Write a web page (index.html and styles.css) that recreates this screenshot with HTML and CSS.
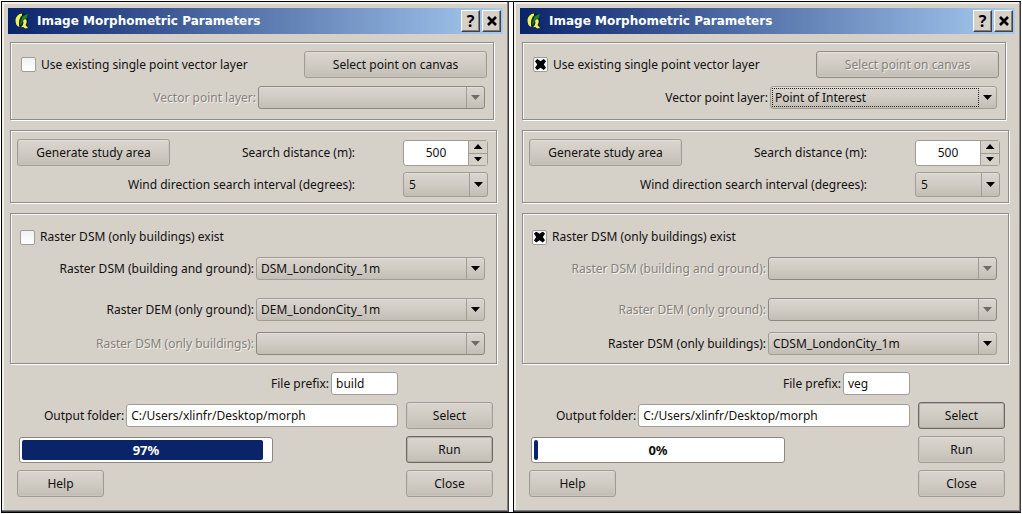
FILE: index.html
```html
<!DOCTYPE html>
<html lang="en">
<head>
<meta charset="utf-8">
<title>Image Morphometric Parameters</title>
<link rel="stylesheet" href="styles.css">
</head>
<body>
<main class="desk">
  <section class="window" aria-label="Image Morphometric Parameters, buildings">
    <header class="titlebar">
      <svg class="logo" viewBox="0 0 16 18" aria-hidden="true">
        <path d="M8 1 C4 1 1 4.500 1 8.500 C1 12 2.500 15 6 15.500 L8 15 L11 17 L14 16 L12 13.500 C14.500 11 14.500 6 13 4 L14 1 L11 2 Z" fill="#101c30"/>
        <path d="M8 1.500 C4 2 1.500 5 1.500 8.500 C1.500 12 3 14.500 5.500 15 C4.500 11 5 6 8 3.500 Z" fill="#f0f25a"/>
        <path d="M10.500 7 C13 7 13.500 10 11.500 13 L14 16 L11 16.500 L9.500 15 L7 15.200 C9 13 10 11.500 9 9 Z" fill="#f0f25a"/>
        <path d="M8.500 4.500 L14 1.500 L12.500 6.500 L9 8 L7 13 L6 12 L7.500 7 Z" fill="#178a24"/>
      </svg>
      <h1 class="title">Image Morphometric Parameters</h1>
      <button class="tbtn" type="button" aria-label="Context help">?</button>
      <button class="tbtn" type="button" aria-label="Close window"><svg viewBox="0 0 10 10" width="10" height="10"><path d="M1 1 L9 9 M9 1 L1 9" stroke="#000" stroke-width="2.600"/></svg></button>
    </header>
    <form class="content">
      <fieldset class="group group-point">
        <div class="row">
          <input class="check" type="checkbox" id="a-existing"><label class="grow" for="a-existing">Use existing single point vector layer</label>
          <button class="btn btn-canvas" type="button">Select point on canvas</button>
        </div>
        <div class="row row-field">
          <label class="off" for="a-point">Vector point layer:</label>
          <span class="combo combo-point"><select id="a-point" disabled><option></option></select></span>
        </div>
      </fieldset>
      <fieldset class="group group-area">
        <div class="row">
          <button class="btn btn-area" type="button">Generate study area</button>
          <label class="grow far" for="a-dist">Search distance (m):</label>
          <span class="spin"><input id="a-dist" type="text" inputmode="numeric" value="500"><button class="step up" type="button" aria-label="Increase"></button><button class="step down" type="button" aria-label="Decrease"></button></span>
        </div>
        <div class="row">
          <label class="grow far" for="a-wind">Wind direction search interval (degrees):</label>
          <span class="combo combo-wind"><select id="a-wind"><option>5</option></select></span>
        </div>
      </fieldset>
      <fieldset class="group group-raster">
        <div class="row row-check"><input class="check" type="checkbox" id="a-only"><label for="a-only">Raster DSM (only buildings) exist</label></div>
        <div class="row row-field">
          <label for="a-dsm">Raster DSM (building and ground):</label>
          <span class="combo"><select id="a-dsm"><option>DSM_LondonCity_1m</option></select></span>
        </div>
        <div class="row row-field row-dem">
          <label for="a-dem">Raster DEM (only ground):</label>
          <span class="combo"><select id="a-dem"><option>DEM_LondonCity_1m</option></select></span>
        </div>
        <div class="row row-field">
          <label class="off" for="a-bld">Raster DSM (only buildings):</label>
          <span class="combo"><select id="a-bld" disabled><option></option></select></span>
        </div>
      </fieldset>
      <div class="output">
        <div class="row row-prefix"><label for="a-prefix">File prefix:</label><input class="text prefix" id="a-prefix" type="text" value="build"></div>
        <div class="row row-folder"><label for="a-folder">Output folder:</label><input class="text folder" id="a-folder" type="text" value="C:/Users/xlinfr/Desktop/morph"><button class="btn btn-side" type="button">Select</button></div>
        <div class="row spread">
          <div class="progress" role="progressbar" aria-valuemin="0" aria-valuemax="100" aria-valuenow="97" aria-label="Progress"><div class="fill" style="width: 97%"></div><span class="percent on-fill">97%</span></div>
          <button class="btn btn-side btn-default" type="button">Run</button>
        </div>
        <div class="row spread">
          <button class="btn btn-side btn-help" type="button">Help</button>
          <button class="btn btn-side" type="button">Close</button>
        </div>
      </div>
    </form>
  </section>

  <section class="window" aria-label="Image Morphometric Parameters, vegetation">
    <header class="titlebar">
      <svg class="logo" viewBox="0 0 16 18" aria-hidden="true">
        <path d="M8 1 C4 1 1 4.500 1 8.500 C1 12 2.500 15 6 15.500 L8 15 L11 17 L14 16 L12 13.500 C14.500 11 14.500 6 13 4 L14 1 L11 2 Z" fill="#101c30"/>
        <path d="M8 1.500 C4 2 1.500 5 1.500 8.500 C1.500 12 3 14.500 5.500 15 C4.500 11 5 6 8 3.500 Z" fill="#f0f25a"/>
        <path d="M10.500 7 C13 7 13.500 10 11.500 13 L14 16 L11 16.500 L9.500 15 L7 15.200 C9 13 10 11.500 9 9 Z" fill="#f0f25a"/>
        <path d="M8.500 4.500 L14 1.500 L12.500 6.500 L9 8 L7 13 L6 12 L7.500 7 Z" fill="#178a24"/>
      </svg>
      <h1 class="title">Image Morphometric Parameters</h1>
      <button class="tbtn" type="button" aria-label="Context help">?</button>
      <button class="tbtn" type="button" aria-label="Close window"><svg viewBox="0 0 10 10" width="10" height="10"><path d="M1 1 L9 9 M9 1 L1 9" stroke="#000" stroke-width="2.600"/></svg></button>
    </header>
    <form class="content">
      <fieldset class="group group-point">
        <div class="row">
          <input class="check" type="checkbox" id="b-existing" checked><label class="grow" for="b-existing">Use existing single point vector layer</label>
          <button class="btn btn-canvas" type="button" disabled>Select point on canvas</button>
        </div>
        <div class="row row-field">
          <label for="b-point">Vector point layer:</label>
          <span class="combo combo-point focused"><select id="b-point"><option>Point of Interest</option></select></span>
        </div>
      </fieldset>
      <fieldset class="group group-area">
        <div class="row">
          <button class="btn btn-area" type="button">Generate study area</button>
          <label class="grow far" for="b-dist">Search distance (m):</label>
          <span class="spin"><input id="b-dist" type="text" inputmode="numeric" value="500"><button class="step up" type="button" aria-label="Increase"></button><button class="step down" type="button" aria-label="Decrease"></button></span>
        </div>
        <div class="row">
          <label class="grow far" for="b-wind">Wind direction search interval (degrees):</label>
          <span class="combo combo-wind"><select id="b-wind"><option>5</option></select></span>
        </div>
      </fieldset>
      <fieldset class="group group-raster">
        <div class="row row-check"><input class="check" type="checkbox" id="b-only" checked><label for="b-only">Raster DSM (only buildings) exist</label></div>
        <div class="row row-field">
          <label class="off" for="b-dsm">Raster DSM (building and ground):</label>
          <span class="combo"><select id="b-dsm" disabled><option></option></select></span>
        </div>
        <div class="row row-field row-dem">
          <label class="off" for="b-dem">Raster DEM (only ground):</label>
          <span class="combo"><select id="b-dem" disabled><option></option></select></span>
        </div>
        <div class="row row-field">
          <label for="b-bld">Raster DSM (only buildings):</label>
          <span class="combo"><select id="b-bld"><option>CDSM_LondonCity_1m</option></select></span>
        </div>
      </fieldset>
      <div class="output">
        <div class="row row-prefix"><label for="b-prefix">File prefix:</label><input class="text prefix" id="b-prefix" type="text" value="veg"></div>
        <div class="row row-folder"><label for="b-folder">Output folder:</label><input class="text folder" id="b-folder" type="text" value="C:/Users/xlinfr/Desktop/morph"><button class="btn btn-side btn-default" type="button">Select</button></div>
        <div class="row spread">
          <div class="progress" role="progressbar" aria-valuemin="0" aria-valuemax="100" aria-valuenow="0" aria-label="Progress"><div class="fill" style="width: 0%"></div><span class="percent">0%</span></div>
          <button class="btn btn-side" type="button">Run</button>
        </div>
        <div class="row spread">
          <button class="btn btn-side btn-help" type="button">Help</button>
          <button class="btn btn-side" type="button">Close</button>
        </div>
      </div>
    </form>
  </section>
</main>
</body>
</html>
```
FILE: styles.css
```css
* { box-sizing: border-box; }

body {
  margin: 0;
  background: #fff;
  color: #111;
  font: 12px/16px "Noto Sans", "DejaVu Sans", sans-serif;
}

button, input, select { font: inherit; color: inherit; margin: 0; }

.desk {
  display: grid;
  grid-template-columns: 1fr 1fr;
  gap: 4px;
  margin: 1px;
  border-top: 1px solid #000;
  border-bottom: 1px solid #000;
}

.window {
  border-left: 1px solid #000;
  padding: 6px;
  background: #d5d0c8;
  box-shadow: inset -1px -1px #404040, inset -2px -2px #808080, inset 2px 2px #f1f0e4;
}

.titlebar {
  display: flex;
  align-items: center;
  height: 26px;
  padding: 0 2px 0 6px;
  background: linear-gradient(90deg, #0a246a, #a6caf0);
}

.logo { width: 16px; height: 18px; margin-right: 7px; }

.title {
  flex: 1;
  margin: 0;
  color: #fff;
  font-family: "DejaVu Sans", sans-serif;
  font-size: 12px;
  font-weight: 700;
  line-height: 18px;
  white-space: nowrap;
}

.tbtn {
  display: grid;
  place-items: center;
  width: 19px;
  height: 22px;
  margin-left: 2px;
  padding: 0;
  border: 1px solid;
  border-color: #fff #404040 #404040 #fff;
  background: #d5d0c8;
  box-shadow: inset -1px -1px #808080;
  color: #000;
  font-size: 16px;
  font-weight: 700;
  line-height: 18px;
}

.content { padding: 8px 2px 9px; }

.group {
  min-width: 0;
  margin: 0 4px 10px 0;
  border: 1px solid #8c8c8a;
  box-shadow: inset 1px 1px #f8f7f5, 1px 1px #fff;
}
.group-point { margin-right: 7px; padding: 8px 6px 10px 10px; }
.group-area { padding: 8px 8px 5px 6px; }
.group-raster { margin-bottom: 8px; padding: 15px 11px 8px 9px; }

.row { display: flex; align-items: center; }
.row label { white-space: nowrap; }
.grow { flex: 1; }
.far { padding-right: 48px; text-align: right; }
.row-field { justify-content: flex-end; gap: 2px; }
.spread { justify-content: space-between; }

.group-point .row-field { margin-top: 8px; padding-right: 2px; }
.group-area .row + .row { margin-top: 6px; }
.row-check { margin-bottom: 12px; }
.row-dem { margin: 18px 0 11px; }

.off, .btn:disabled, .combo select:disabled {
  color: #85817a;
  text-shadow: 1px 1px #f4f2ee;
}

.check {
  appearance: none;
  display: grid;
  place-items: center;
  width: 15px;
  height: 15px;
  margin-right: 5px;
  border: 1px solid #a09d96;
  border-radius: 2px;
  background: linear-gradient(#f2f2f2, #fff);
}
.check:checked::before {
  content: "";
  width: 11px;
  height: 11px;
  background: #000;
  clip-path: polygon(0 20%, 20% 0, 50% 20%, 80% 0, 100% 20%, 80% 50%, 100% 80%, 80% 100%, 50% 80%, 20% 100%, 0 80%, 20% 50%);
}

.btn {
  height: 27px;
  padding: 0 8px;
  border: 1px solid #a19d95;
  border-radius: 3px;
  background: linear-gradient(#dad6cf, #d0cbc3 50%, #c2bdb5);
  box-shadow: inset 0 1px #e2dfd9, inset 0 0 0 1px #cac6be;
  text-align: center;
}
.btn:disabled { border-color: #918d86; }
.btn-canvas { width: 183px; }
.btn-area { width: 153px; }
.btn-side { width: 87px; }
.btn-default { border-color: #6b6964; box-shadow: inset 0 0 0 1px #b3afa7; }

.combo { position: relative; display: flex; width: 229px; }
.combo-point { width: 227px; }
.combo-wind { width: 85px; }
.combo select {
  appearance: none;
  width: 100%;
  height: 23px;
  padding: 0 22px 0 4px;
  border: 1px solid #a19d95;
  border-radius: 3px;
  background: linear-gradient(#dad6cf, #d0cbc3 50%, #c2bdb5);
  box-shadow: inset 0 1px #e2dfd9;
  opacity: 1;
}
.combo-wind select { height: 25px; padding-left: 5px; }
.combo select:disabled { border-color: #8c8881; }
.combo::before {
  content: "";
  position: absolute;
  top: 1px;
  bottom: 1px;
  right: 18px;
  border-left: 1px solid #a19d95;
}
.combo::after, .step::before {
  content: "";
  width: 9px;
  height: 5px;
  background: #000;
  clip-path: polygon(0 0, 100% 0, 50% 100%);
}
.combo::after {
  position: absolute;
  top: 0;
  bottom: 0;
  right: 5px;
  margin: auto 0;
  pointer-events: none;
}
.combo:has(select:disabled)::after { background: #6f6c66; }
.focused::before {
  top: 2px;
  bottom: 2px;
  left: 2px;
  border: 1px dotted #222;
  pointer-events: none;
}

.spin {
  display: grid;
  grid-template: 12px 12px / 1fr 19px;
  width: 85px;
  border: 1px solid #a19d95;
  border-radius: 3px;
  background: #fff;
}
.spin input {
  grid-row: 1 / 3;
  min-width: 0;
  padding: 0;
  border: 0;
  background: none;
  text-align: center;
}
.step {
  display: grid;
  place-items: center;
  padding: 0;
  border: 0;
  border-left: 1px solid #a19d95;
  background: #d5d0c8;
}
.step.down { border-top: 1px solid #a19d95; }
.step.up::before { clip-path: polygon(0 100%, 100% 100%, 50% 0); }

.output { display: grid; gap: 7px; padding-right: 8px; }
.row-prefix { justify-content: flex-end; gap: 2px; padding-right: 95px; }
.row-folder { gap: 2px; padding-left: 34px; }
.text {
  height: 23px;
  padding: 0 4px;
  border: 1px solid #a19d95;
  border-radius: 3px;
  background: #fff;
}
.prefix { width: 67px; }
.folder { flex: 1; min-width: 0; margin-right: 6px; }

.progress {
  position: relative;
  width: 254px;
  height: 26px;
  margin-left: 9px;
  padding: 2px;
  border: 1px solid #8c8881;
  border-radius: 3px;
  background: #fff;
}
.fill {
  min-width: 4px;
  height: 100%;
  border-radius: 2px;
  background: #0a246a;
}
.percent {
  position: absolute;
  inset: 0;
  font-size: 13px;
  font-weight: 700;
  line-height: 24px;
  text-align: center;
}
.on-fill { color: #fff; }
.btn-help { margin-left: 7px; }
```
